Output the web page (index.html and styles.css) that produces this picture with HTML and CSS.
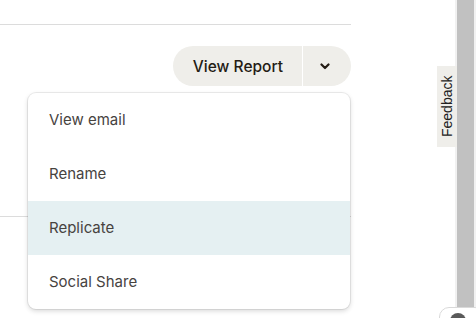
FILE: index.html
```html
<html>

<head>
  <link rel="stylesheet" href="styles.css">
</head>

<body>
  <div class="page">
    <div class="main">
      <div class="topbar"></div>

      <div class="toolbar">
        <div class="split">
          <button class="split-main" type="button">View Report</button>
          <button class="split-toggle" type="button">
            <svg width="10" height="7" viewBox="0 0 10 7">
              <polyline points="1.5,1.5 5,5 8.5,1.5" fill="none" stroke="#241c15" stroke-width="2.2" stroke-linecap="round" stroke-linejoin="round" />
            </svg>
          </button>
        </div>

        <!-- dropdown opened from the toggle -->
        <ul class="menu">
          <li class="menu-item">View email</li>
          <li class="menu-item">Rename</li>
          <li class="menu-item active">Replicate</li>
          <li class="menu-item">Social Share</li>
        </ul>
      </div>

      <div class="rows">
        <div class="row"></div>
      </div>
    </div>

    <div class="scrollbar">
      <div class="thumb"></div>
    </div>
  </div>

  <a class="feedback">Feedback</a>
  <div class="chat"><span class="chat-dot"></span></div>
</body>

</html>
```

FILE: styles.css
```css
body {
  margin: 0;
  background: #ffffff;
  font-family: 'Inter', 'Roboto', sans-serif;
  overflow: hidden;
}

.page {
  display: flex;
  height: 318px;
}

.main {
  width: 351px;
  flex: none;
}

.topbar {
  height: 24px;
  border-bottom: 1px solid #dcdcdc;
}

.toolbar {
  position: relative;
  display: flex;
  justify-content: flex-end;
  margin-top: 21px;
}

.split {
  display: flex;
  height: 40px;
}

.split button {
  border: 0;
  background: #efeeea;
  color: #241c15;
  font-family: 'Inter', 'Roboto', sans-serif;
  font-size: 15.5px;
  font-weight: 500;
  cursor: pointer;
}

.split-main {
  padding: 0 19px 0 20px;
  border-radius: 20px 0 0 20px;
}

.split-toggle {
  width: 48px;
  margin-left: 1px;
  padding: 0 4px 0 0;
  border-radius: 0 20px 20px 0;
}

.split-toggle svg {
  display: block;
  margin: 0 auto;
}

.menu {
  position: absolute;
  top: 47px;
  left: 28px;
  right: 1px;
  margin: 0;
  padding: 0;
  list-style: none;
  background: #ffffff;
  border-radius: 8px;
  box-shadow: 0 0 0 1px rgba(0, 0, 0, 0.07), 0 2px 5px rgba(0, 0, 0, 0.16);
  overflow: hidden;
  z-index: 2;
}

.menu-item {
  height: 54px;
  line-height: 54px;
  padding-left: 21px;
  font-size: 15px;
  color: #47433f;
}

.menu-item.active {
  background: #e5f0f2;
}

.row {
  height: 130px;
  border-bottom: 1px solid #dcdcdc;
}

.scrollbar {
  margin-left: auto;
  width: 21px;
  background: #f1f1f1;
  padding: 0 2px;
  box-sizing: border-box;
}

.thumb {
  height: 308px;
  background: #c1c1c1;
}

.feedback {
  position: fixed;
  top: 66px;
  left: 437px;
  width: 20px;
  height: 81px;
  display: flex;
  align-items: center;
  justify-content: center;
  background: #efeeea;
  color: #222222;
  font-family: 'Liberation Sans', Arial, sans-serif;
  font-size: 14px;
  writing-mode: vertical-rl;
  transform: rotate(180deg);
}

.chat {
  position: fixed;
  left: 439px;
  top: 307px;
  width: 44px;
  height: 44px;
  background: #ffffff;
  border: 1px solid #d9d9d9;
  border-radius: 10px;
}

.chat-dot {
  position: absolute;
  left: 10px;
  top: 5px;
  width: 16px;
  height: 16px;
  border-radius: 50%;
  background: #5a5a5a;
}
```
